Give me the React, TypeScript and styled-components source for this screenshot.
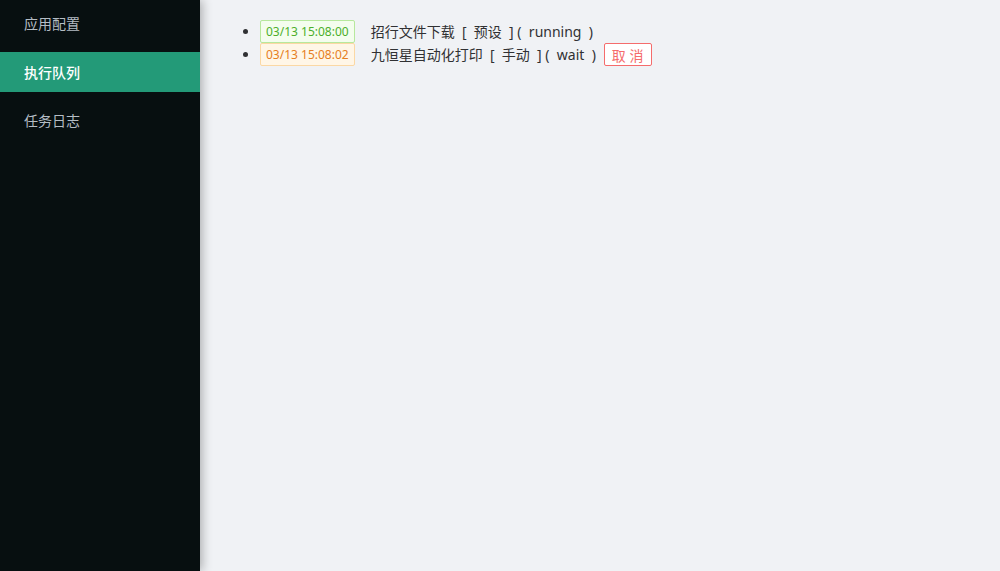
import React from "react";
import styled, { createGlobalStyle } from "styled-components";

const Global = createGlobalStyle`
  html, body { margin: 0; padding: 0; height: 100%; }
  body {
    font-family: "Segoe UI", "Noto Sans", "Noto Sans CJK SC", sans-serif;
    background: #f0f2f5;
  }
  #root { height: 100%; }
`;

const Layout = styled.div`
  display: flex;
  height: 571px;
  width: 1000px;
  overflow: hidden;
`;

const Sidebar = styled.nav`
  width: 200px;
  flex: 0 0 200px;
  background: #070f10;
  display: flex;
  flex-direction: column;
  gap: 8px;
  padding-top: 3px;
  box-shadow: 2px 0 10px rgba(0, 0, 0, 0.3);
  position: relative;
  z-index: 1;
`;

const MenuItem = styled.div<{ $active?: boolean }>`
  height: 40px;
  display: flex;
  align-items: center;
  padding-left: 24px;
  font-size: 14px;
  color: ${(p) => (p.$active ? "#ffffff" : "#b4bcc4")};
  font-weight: ${(p) => (p.$active ? 500 : 400)};
  background: ${(p) => (p.$active ? "#239a78" : "transparent")};
  &:nth-child(2) { margin-top: 1px; }
`;

const Main = styled.main`
  flex: 1;
  padding: 20px;
  background: #f0f2f5;
`;

const List = styled.ul`
  margin: 0;
  padding-left: 40px;
  list-style: disc;
  color: #303133;
`;

const Row = styled.li`
  font-size: 14px;
  line-height: 23px;
  height: 23px;
  &::marker { color: #303133; }
`;

const RowInner = styled.span`
  display: inline-flex;
  align-items: center;
  height: 23px;
  vertical-align: top;
`;

const Tag = styled.span<{ $kind: "success" | "warning" }>`
  display: inline-flex;
  align-items: center;
  box-sizing: border-box;
  height: 23px;
  padding: 0 5px;
  font-size: 12px;
  border: 1px solid ${(p) => (p.$kind === "success" ? "#b7e89d" : "#fbd8a4")};
  background: ${(p) => (p.$kind === "success" ? "#f4fdee" : "#fff6e7")};
  color: ${(p) => (p.$kind === "success" ? "#4caf2a" : "#e67e22")};
  border-radius: 2px;
  margin-right: 16px;
`;

const Text = styled.span`
  white-space: pre;
  color: #303133;
`;

const CancelButton = styled.button`
  box-sizing: border-box;
  height: 23px;
  margin-left: 8px;
  padding: 0 7px;
  font-family: inherit;
  font-size: 14px;
  color: #f56c6c;
  background: #ffffff;
  border: 1px solid #f56c6c;
  border-radius: 2px;
  white-space: pre;
  cursor: pointer;
`;

const tasks = [
  { time: "03/13 15:08:00", kind: "success" as const, name: "招行文件下载", mode: "预设", status: "running", cancel: false },
  { time: "03/13 15:08:02", kind: "warning" as const, name: "九恒星自动化打印", mode: "手动", status: "wait", cancel: true },
];

export default function App() {
  return (
    <Layout>
      <Global />
      <Sidebar>
        <MenuItem>应用配置</MenuItem>
        <MenuItem $active>执行队列</MenuItem>
        <MenuItem>任务日志</MenuItem>
      </Sidebar>
      <Main>
        <List>
          {tasks.map((t) => (
            <Row key={t.time}>
              <RowInner>
                <Tag $kind={t.kind}>{t.time}</Tag>
                <Text>{`${t.name}  [  ${t.mode}  ] (  ${t.status}  )`}</Text>
                {t.cancel && <CancelButton>取 消</CancelButton>}
              </RowInner>
            </Row>
          ))}
        </List>
      </Main>
    </Layout>
  );
}
